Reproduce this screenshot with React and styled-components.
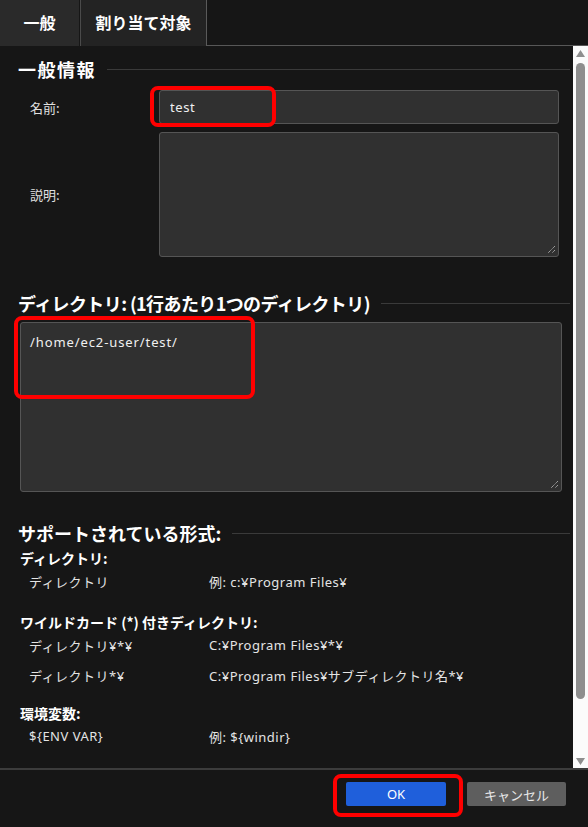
import React from "react";
import styled, { createGlobalStyle } from "styled-components";

const Global = createGlobalStyle`
  html, body { margin: 0; padding: 0; background: #161616; }
  * { box-sizing: border-box; }
  body { font-family: "Noto Sans CJK JP", "Noto Sans", sans-serif; }
`;

const FONT = `"Noto Sans CJK JP", "Noto Sans", sans-serif`;
const TEXT_FONT = `"Noto Sans", "Noto Sans CJK JP", sans-serif`;

const Page = styled.div`
  position: relative;
  width: 588px;
  height: 827px;
  display: flex;
  flex-direction: column;
  background: #161616;
  color: #e6e6e6;
  font-family: ${FONT};
  overflow: hidden;
`;

const TabBar = styled.div`
  display: flex;
  height: 46px;
  flex-shrink: 0;
  background: #161616;
`;

const Tab = styled.div`
  width: ${(p) => p.$w}px;
  height: 46px;
  display: flex;
  align-items: center;
  justify-content: center;
  padding-bottom: 2px;
  font-size: 16px;
  font-weight: 700;
  color: #ffffff;
  background: ${(p) => (p.$active ? "#232323" : "#2a2a2a")};
  border-left: ${(p) => (p.$active ? "1px solid #4a4a4a" : "none")};
  border-right: ${(p) => (p.$active ? "1px solid #5a5a5a" : "1px solid #161616")};
`;

const TabFill = styled.div`
  flex: 1;
  border-bottom: 1px solid #575757;
`;

const Body = styled.div`
  flex: 1;
  display: flex;
  min-height: 0;
`;

const Content = styled.div`
  flex: 1;
  display: flex;
  flex-direction: column;
  padding: 0 3px 0 18px;
`;

const SectionHead = styled.div`
  display: flex;
  align-items: center;
  gap: 11px;
  height: 24px;
  margin-top: ${(p) => p.$top}px;
  font-size: 18px;
  font-weight: 700;
  letter-spacing: ${(p) => p.$ls || 0}px;
  color: #ffffff;
  white-space: nowrap;
  &::after {
    content: "";
    flex: 1;
    height: 1px;
    background: #3a3a3a;
  }
`;

const FormGrid = styled.div`
  display: grid;
  grid-template-columns: 141px 400px;
  grid-template-rows: 34px 125px;
  row-gap: 8px;
  margin-top: 9px;
`;

const Label = styled.div`
  display: flex;
  align-items: center;
  padding-left: 12px;
  font-size: 13px;
  color: #e0e0e0;
`;

const TextInput = styled.input`
  width: 100%;
  height: 34px;
  background: #303030;
  border: 1px solid #555;
  border-radius: 3px;
  padding: 0 10px;
  font-family: ${TEXT_FONT};
  font-size: 13px;
  letter-spacing: 0.6px;
  color: #f0f0f0;
  outline: none;
`;

const AreaWrap = styled.div`
  position: relative;
  margin-left: ${(p) => p.$left || 0}px;
  width: ${(p) => (p.$w ? `${p.$w}px` : "100%")};
  height: ${(p) => p.$h}px;
  margin-top: ${(p) => p.$top || 0}px;
`;

const TextArea = styled.textarea`
  display: block;
  width: 100%;
  height: 100%;
  background: #303030;
  border: 1px solid #555;
  border-radius: 3px;
  padding: 10px 9px;
  font-family: ${TEXT_FONT};
  font-size: 13px;
  letter-spacing: 0.9px;
  line-height: 18px;
  color: #f0f0f0;
  resize: none;
  outline: none;
`;

const Grip = styled.svg`
  position: absolute;
  right: 3px;
  bottom: 3px;
  width: 9px;
  height: 9px;
`;

const SubHead = styled.div`
  height: 22px;
  line-height: 22px;
  margin-top: ${(p) => p.$top}px;
  margin-left: 2px;
  font-size: 14px;
  font-weight: 700;
  color: #ffffff;
  white-space: pre;
`;

const Rows = styled.div`
  display: flex;
  flex-direction: column;
  gap: 6px;
`;

const Row = styled.div`
  display: grid;
  grid-template-columns: 180px 1fr;
  height: 24px;
  align-items: center;
  padding-left: 11px;
  font-family: ${TEXT_FONT};
  font-size: 13px;
  letter-spacing: 0.5px;
  color: #e4e4e4;
  white-space: nowrap;
`;

const ScrollTrack = styled.div`
  width: 15px;
  flex-shrink: 0;
  background: #fbfbfb;
  display: flex;
  flex-direction: column;
  align-items: center;
  padding: 4px 0 3px;
`;

const Arrow = styled.svg`
  width: 9px;
  height: 7px;
  flex-shrink: 0;
`;

const Thumb = styled.div`
  width: 9px;
  height: 636px;
  margin-top: 6px;
  border-radius: 5px;
  background: #8e8e8e;
`;

const Spacer = styled.div`
  flex: 1;
`;

const Footer = styled.div`
  height: 59px;
  flex-shrink: 0;
  border-top: 2px solid #3c3c3c;
  display: flex;
  justify-content: flex-end;
  align-items: flex-start;
  gap: 21px;
  padding: 12px 22px 0 0;
`;

const Button = styled.button`
  width: ${(p) => p.$w}px;
  height: 24px;
  border: none;
  border-radius: 2px;
  background: ${(p) => (p.$primary ? "#1f5fdb" : "#5e5e5e")};
  color: ${(p) => (p.$primary ? "#ffffff" : "#e8e8e8")};
  font-family: ${TEXT_FONT};
  font-size: 13px;
  padding: 0;
`;

const Mark = styled.div`
  position: absolute;
  left: ${(p) => p.$x}px;
  top: ${(p) => p.$y}px;
  width: ${(p) => p.$w}px;
  height: ${(p) => p.$h}px;
  border: 4px solid #ff0000;
  border-radius: 8px;
  pointer-events: none;
`;

function ResizeGrip() {
  return (
    <Grip viewBox="0 0 9 9">
      <path d="M8 1 L1 8 M8 5 L5 8" stroke="#b0b0b0" strokeWidth="1" strokeDasharray="1.2 0.6" />
    </Grip>
  );
}

export default function App() {
  return (
    <Page>
      <Global />
      <TabBar>
        <Tab $w={80}>一般</Tab>
        <Tab $w={127} $active>割り当て対象</Tab>
        <TabFill />
      </TabBar>
      <Body>
        <Content>
          <SectionHead $top={11} $ls={1.5}>一般情報</SectionHead>
          <FormGrid>
            <Label>名前:</Label>
            <TextInput readOnly value="test" />
            <Label>説明:</Label>
            <AreaWrap $h={125}>
              <TextArea readOnly value="" />
              <ResizeGrip />
            </AreaWrap>
          </FormGrid>
          <SectionHead $top={34} $ls={-0.6}>ディレクトリ: (1行あたり1つのディレクトリ)</SectionHead>
          <AreaWrap $top={7} $left={2} $w={542} $h={170}>
            <TextArea readOnly value="/home/ec2-user/test/" />
            <ResizeGrip />
          </AreaWrap>
          <SectionHead $top={29}>サポートされている形式:</SectionHead>
          <SubHead $top={2}>ディレクトリ:</SubHead>
          <Rows>
            <Row>
              <span>ディレクトリ</span>
              <span>例: c:¥Program Files¥</span>
            </Row>
          </Rows>
          <SubHead $top={18}>ワイルドカード (*) 付きディレクトリ:</SubHead>
          <Rows>
            <Row>
              <span>ディレクトリ¥*¥</span>
              <span>C:¥Program Files¥*¥</span>
            </Row>
            <Row>
              <span>ディレクトリ*¥</span>
              <span>C:¥Program Files¥サブディレクトリ名*¥</span>
            </Row>
          </Rows>
          <SubHead $top={15}>環境変数:</SubHead>
          <Rows>
            <Row>
              <span>{"${ENV VAR}"}</span>
              <span>{"例: ${windir}"}</span>
            </Row>
          </Rows>
        </Content>
        <ScrollTrack>
          <Arrow viewBox="0 0 9 7">
            <path d="M4.5 0 L9 7 L0 7 Z" fill="#8e8e8e" />
          </Arrow>
          <Thumb />
          <Spacer />
          <Arrow viewBox="0 0 9 7">
            <path d="M0 0 L9 0 L4.5 7 Z" fill="#8e8e8e" />
          </Arrow>
        </ScrollTrack>
      </Body>
      <Footer>
        <Button $primary $w={100}>OK</Button>
        <Button $w={99}>キャンセル</Button>
      </Footer>
      <Mark $x={150} $y={86} $w={126} $h={41} />
      <Mark $x={14} $y={316} $w={241} $h={83} />
      <Mark $x={333} $y={774} $w={130} $h={43} />
    </Page>
  );
}
